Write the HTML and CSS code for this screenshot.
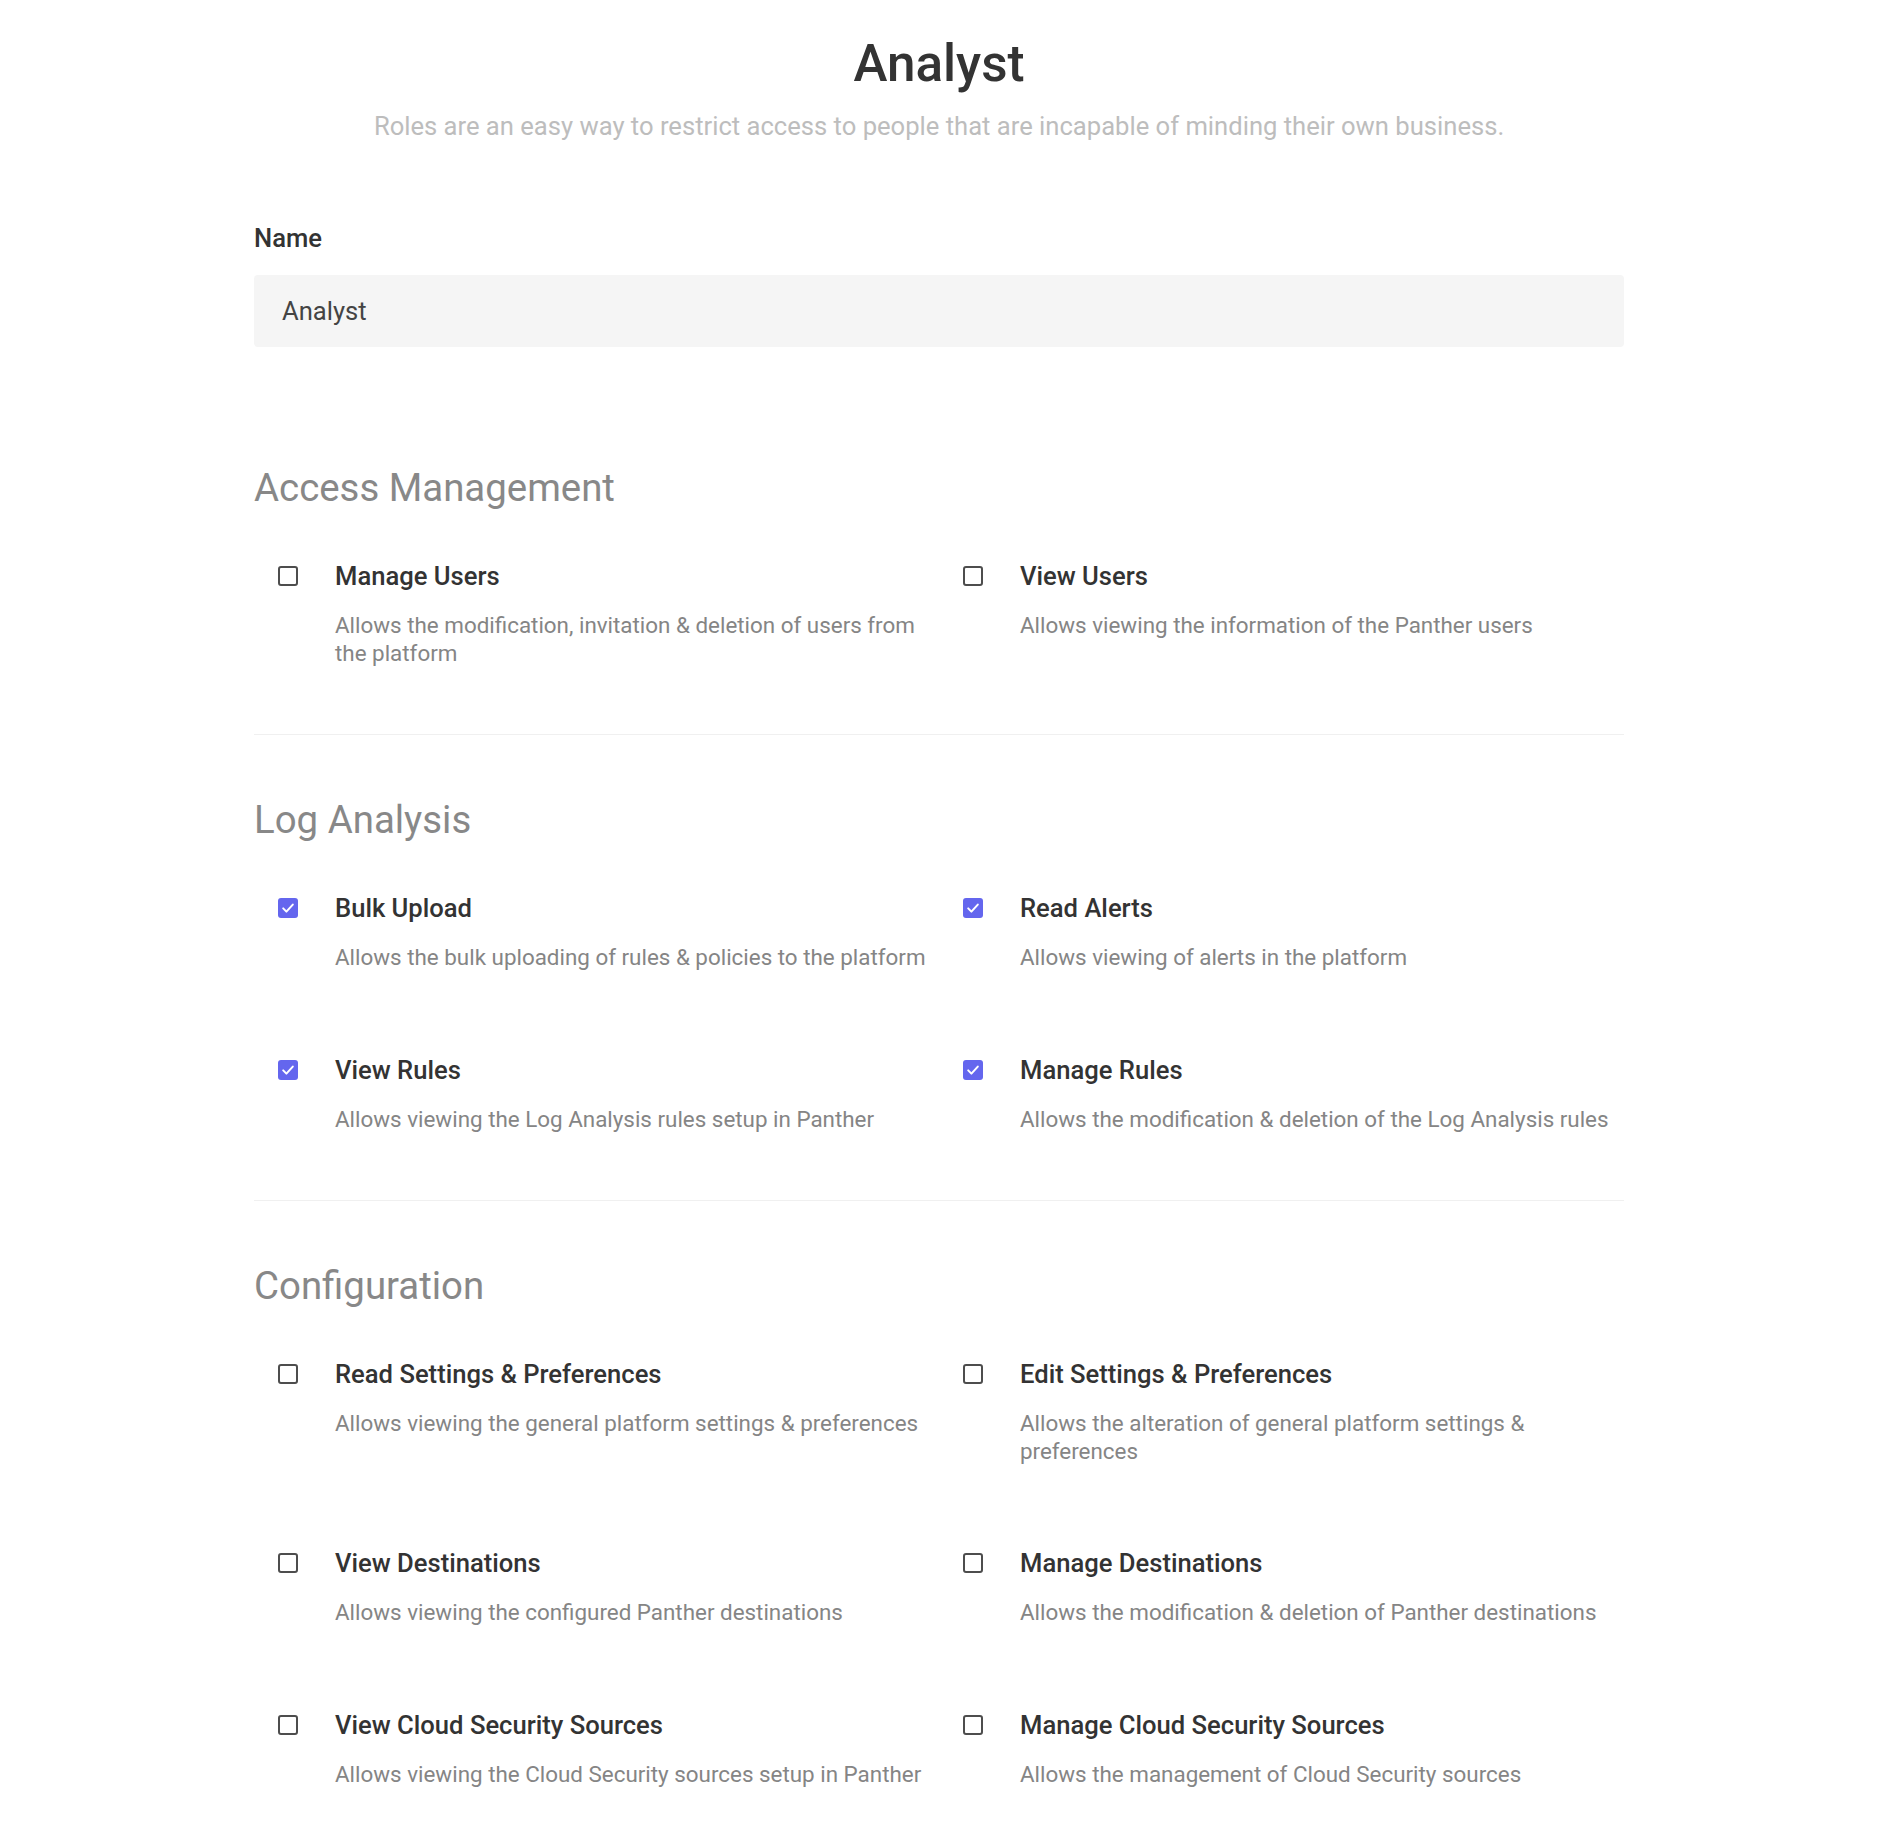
FILE: index.html
```html
<!DOCTYPE html>
<html lang="en">
<head>
<meta charset="utf-8">
<title>Analyst</title>
<link rel="stylesheet" href="styles.css">
</head>
<body>
<main class="page">
  <header class="header">
    <h1 class="title">Analyst</h1>
    <p class="subtitle">Roles are an easy way to restrict access to people that are incapable of minding their own business.</p>
  </header>

  <div class="field">
    <label class="field-label" for="name">Name</label>
    <div class="input" id="name">Analyst</div>
  </div>

  <section class="section">
    <h2 class="section-title">Access Management</h2>
    <div class="grid">
      <div class="item">
        <span class="box"></span>
        <div class="text">
          <div class="label">Manage Users</div>
          <div class="desc">Allows the modification, invitation &amp; deletion of users from the platform</div>
        </div>
      </div>
      <div class="item">
        <span class="box"></span>
        <div class="text">
          <div class="label">View Users</div>
          <div class="desc">Allows viewing the information of the Panther users</div>
        </div>
      </div>
    </div>
  </section>

  <section class="section">
    <h2 class="section-title">Log Analysis</h2>
    <div class="grid">
      <div class="item">
        <span class="box checked"><svg viewBox="0 0 20 20" width="20" height="20"><path d="M5.2 10.4l3.2 3.2 6.4-7" fill="none" stroke="#fff" stroke-width="2" stroke-linecap="round" stroke-linejoin="round"/></svg></span>
        <div class="text">
          <div class="label">Bulk Upload</div>
          <div class="desc">Allows the bulk uploading of rules &amp; policies to the platform</div>
        </div>
      </div>
      <div class="item">
        <span class="box checked"><svg viewBox="0 0 20 20" width="20" height="20"><path d="M5.2 10.4l3.2 3.2 6.4-7" fill="none" stroke="#fff" stroke-width="2" stroke-linecap="round" stroke-linejoin="round"/></svg></span>
        <div class="text">
          <div class="label">Read Alerts</div>
          <div class="desc">Allows viewing of alerts in the platform</div>
        </div>
      </div>
      <div class="item">
        <span class="box checked"><svg viewBox="0 0 20 20" width="20" height="20"><path d="M5.2 10.4l3.2 3.2 6.4-7" fill="none" stroke="#fff" stroke-width="2" stroke-linecap="round" stroke-linejoin="round"/></svg></span>
        <div class="text">
          <div class="label">View Rules</div>
          <div class="desc">Allows viewing the Log Analysis rules setup in Panther</div>
        </div>
      </div>
      <div class="item">
        <span class="box checked"><svg viewBox="0 0 20 20" width="20" height="20"><path d="M5.2 10.4l3.2 3.2 6.4-7" fill="none" stroke="#fff" stroke-width="2" stroke-linecap="round" stroke-linejoin="round"/></svg></span>
        <div class="text">
          <div class="label">Manage Rules</div>
          <div class="desc">Allows the modification &amp; deletion of the Log Analysis rules</div>
        </div>
      </div>
    </div>
  </section>

  <section class="section">
    <h2 class="section-title">Configuration</h2>
    <div class="grid">
      <div class="item">
        <span class="box"></span>
        <div class="text">
          <div class="label">Read Settings &amp; Preferences</div>
          <div class="desc">Allows viewing the general platform settings &amp; preferences</div>
        </div>
      </div>
      <div class="item">
        <span class="box"></span>
        <div class="text">
          <div class="label">Edit Settings &amp; Preferences</div>
          <div class="desc">Allows the alteration of general platform settings &amp; preferences</div>
        </div>
      </div>
      <div class="item">
        <span class="box"></span>
        <div class="text">
          <div class="label">View Destinations</div>
          <div class="desc">Allows viewing the configured Panther destinations</div>
        </div>
      </div>
      <div class="item">
        <span class="box"></span>
        <div class="text">
          <div class="label">Manage Destinations</div>
          <div class="desc">Allows the modification &amp; deletion of Panther destinations</div>
        </div>
      </div>
      <div class="item">
        <span class="box"></span>
        <div class="text">
          <div class="label">View Cloud Security Sources</div>
          <div class="desc">Allows viewing the Cloud Security sources setup in Panther</div>
        </div>
      </div>
      <div class="item">
        <span class="box"></span>
        <div class="text">
          <div class="label">Manage Cloud Security Sources</div>
          <div class="desc">Allows the management of Cloud Security sources</div>
        </div>
      </div>
    </div>
  </section>
</main>
</body>
</html>
```

FILE: styles.css
```css
* { box-sizing: border-box; }

html, body {
  margin: 0;
  padding: 0;
  background: #ffffff;
}

body {
  font-family: Roboto, "Noto Sans", sans-serif;
  color: #333333;
}

.page {
  width: 1370px;
  margin: 0 auto;
  padding-top: 34px;
}

.header {
  text-align: center;
}

.title {
  margin: 0;
  font-size: 51.2px;
  line-height: 60px;
  font-weight: 500;
  color: #333333;
}

.subtitle {
  margin: 16px 0 0;
  font-size: 25.6px;
  line-height: 32px;
  color: #bdbdbd;
}

.field {
  margin-top: 81px;
}

.field-label {
  display: block;
  font-size: 25.6px;
  line-height: 30px;
  font-weight: 500;
  color: #333333;
}

.input {
  margin-top: 22px;
  height: 72px;
  display: flex;
  align-items: center;
  padding: 0 28px;
  background: #f5f5f5;
  border-radius: 4px;
  font-size: 25.6px;
  color: #444444;
}

.field + .section {
  margin-top: 56px;
}

.section {
  padding: 62px 0 67px;
  border-bottom: 1px solid #f0f0f0;
}

.section:last-child {
  border-bottom: none;
}

.section-title {
  margin: 0;
  font-size: 38.4px;
  line-height: 46px;
  font-weight: 400;
  color: #888888;
}

.grid {
  margin-top: 49px;
  display: grid;
  grid-template-columns: 1fr 1fr;
  row-gap: 82.5px;
}

.item {
  display: flex;
  align-items: flex-start;
  gap: 37px;
  padding-left: 24px;
}

.box {
  flex: none;
  width: 20px;
  height: 20px;
  margin-top: 6px;
  border: 2px solid #4d4d4d;
  border-radius: 3px;
  display: flex;
  align-items: center;
  justify-content: center;
}

.box.checked {
  border: none;
  background: #6466ee;
}

.box svg {
  display: block;
}

.label {
  font-size: 25.6px;
  line-height: 32px;
  font-weight: 500;
  color: #333333;
}

.desc {
  margin-top: 19px;
  font-size: 22.4px;
  line-height: 28px;
  color: #858585;
}
```
